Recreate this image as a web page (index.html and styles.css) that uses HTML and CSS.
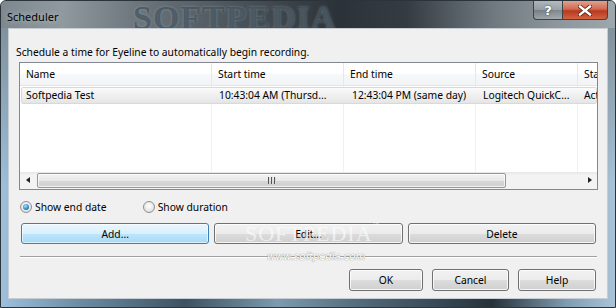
FILE: index.html
```html
<!DOCTYPE html>
<html lang="en">
<head>
  <meta charset="UTF-8">
  <title>Scheduler</title>
  <link rel="stylesheet" href="styles.css">
</head>
<body>
  <div class="window">
    <div class="titlebar">
      <span class="title">Scheduler</span>
      <div class="caption-buttons">
        <span class="caption-btn caption-btn--help">?</span>
        <span class="caption-btn caption-btn--close">
          <svg width="14" height="11" viewBox="0 0 14 11">
            <path d="M2 1.5 L12 9.5 M12 1.5 L2 9.5" stroke="#5a1a0c" stroke-width="4" stroke-linecap="square" fill="none"/>
            <path d="M2 1.5 L12 9.5 M12 1.5 L2 9.5" stroke="#fff" stroke-width="2.4" stroke-linecap="square" fill="none"/>
          </svg>
        </span>
      </div>
      <span class="watermark watermark--title">SOFTPEDIA</span>
    </div>

    <div class="client">
      <p class="intro">Schedule a time for Eyeline to automatically begin recording.</p>

      <div class="listview">
        <div class="lv-header">
          <span class="lv-col lv-col--name">Name</span>
          <span class="lv-col lv-col--start">Start time</span>
          <span class="lv-col lv-col--end">End time</span>
          <span class="lv-col lv-col--source">Source</span>
          <span class="lv-col lv-col--status">Status</span>
        </div>
        <div class="lv-body">
          <div class="lv-row lv-row--selected">
            <span class="lv-cell lv-cell--name">Softpedia Test</span>
            <span class="lv-cell lv-cell--start">10:43:04 AM (Thursd...</span>
            <span class="lv-cell lv-cell--end">12:43:04 PM (same day)</span>
            <span class="lv-cell lv-cell--source">Logitech QuickC...</span>
            <span class="lv-cell lv-cell--status">Active</span>
          </div>
        </div>
        <div class="hscroll">
          <span class="hscroll__arrow hscroll__arrow--left"></span>
          <span class="hscroll__track">
            <span class="hscroll__thumb"><span class="hscroll__grip"></span></span>
          </span>
          <span class="hscroll__arrow hscroll__arrow--right"></span>
        </div>
      </div>

      <div class="radios">
        <label class="radio radio--checked"><span class="radio__dot"></span>Show end date</label>
        <label class="radio"><span class="radio__dot"></span>Show duration</label>
      </div>

      <div class="action-buttons">
        <button class="btn btn--focused">Add...</button>
        <button class="btn">Edit...</button>
        <button class="btn">Delete</button>
      </div>

      <div class="separator"></div>

      <div class="dialog-buttons">
        <button class="btn btn--ok">OK</button>
        <button class="btn btn--cancel">Cancel</button>
        <button class="btn btn--help">Help</button>
      </div>

      <span class="watermark watermark--button">SOFTPEDIA<sup>™</sup></span>
      <span class="watermark watermark--url">www.softpedia.com</span>
    </div>
  </div>
</body>
</html>
```

FILE: styles.css
```css
body, html {
  margin: 0;
  font-family: "Noto Sans", "Liberation Sans", sans-serif;
  font-size: 10.3px;
  color: #000;
}

.window {
  position: relative;
  width: 616px;
  height: 308px;
  box-sizing: border-box;
  border: 1px solid #2b343a;
  border-radius: 6px 6px 0 0;
  display: flex;
  flex-direction: column;
  overflow: hidden;
  background:
    linear-gradient(to bottom, rgba(120, 132, 138, 0.9), rgba(120, 132, 138, 0) 60%),
    linear-gradient(to right, #9ec0dc 0%, #6f8fa6 12%, #3c5262 30%, #7d9aae 45%, #4e6676 60%, #26323a 80%, #7f9bb0 92%, #a9c4d8 100%);
}

/* title bar */
.titlebar {
  position: relative;
  height: 27px;
  flex: none;
  display: flex;
  justify-content: space-between;
  align-items: flex-start;
  padding: 0 7px 0 6px;
  background: linear-gradient(to right, #7d888e 0%, #8f999e 10%, #6c767c 22%, #4a545a 38%, #2c3338 55%, #343c42 66%, #6e787e 80%, #8b959a 90%, #9ea7ab 100%);
}

.title {
  position: relative;
  z-index: 1;
  margin-top: 8px;
  font-size: 11px;
  color: #000;
  text-shadow: 0 0 6px rgba(255, 255, 255, 0.6);
}

.caption-buttons {
  position: relative;
  z-index: 1;
  display: flex;
}

.caption-btn {
  display: flex;
  align-items: center;
  justify-content: center;
  height: 18px;
  border: 1px solid #3d4448;
  border-top: none;
  color: #fff;
  font-weight: bold;
  font-family: "DejaVu Sans", sans-serif;
}

.caption-btn--help {
  width: 28px;
  border-right: none;
  border-radius: 0 0 0 4px;
  font-size: 13px;
  background: linear-gradient(to bottom, rgba(255, 255, 255, 0.35), rgba(255, 255, 255, 0.12) 50%, rgba(0, 0, 0, 0.1) 51%, rgba(255, 255, 255, 0.2));
  text-shadow: 0 0 2px #333;
}

.caption-btn--close {
  width: 44px;
  border-radius: 0 0 4px 0;
  background: linear-gradient(to bottom, #e3a08f, #d06a52 45%, #b8391f 55%, #d4623f);
}

.watermark {
  position: absolute;
  pointer-events: none;
  font-family: "Liberation Serif", serif;
  font-weight: bold;
}

.watermark--title {
  left: 132px;
  top: -2px;
  font-size: 34px;
  letter-spacing: 1px;
  color: rgba(58, 74, 86, 0.7);
  text-shadow: 0 0 3px rgba(170, 182, 190, 0.5);
}

/* client area */
.client {
  position: relative;
  flex: 1;
  margin: 0 7px 8px 7px;
  padding: 0 9px 0 10px;
  background: #f0f0f0;
  border: 1px solid #c6ced3;
  display: flex;
  flex-direction: column;
}

.intro {
  margin: 16px 0 0 -3px;
  line-height: 14px;
}

/* list view */
.listview {
  margin-top: 3px;
  height: 128px;
  box-sizing: border-box;
  border: 1px solid #828790;
  background: #fff;
  display: flex;
  flex-direction: column;
  overflow: hidden;
}

.lv-header {
  display: flex;
  height: 22px;
  flex: none;
  align-items: center;
  background: linear-gradient(to bottom, #fff, #fff 50%, #f7f8f9 51%, #f2f3f5);
  border-bottom: 1px solid #e5e5e5;
}

.lv-col {
  box-sizing: border-box;
  flex: none;
  padding-left: 6px;
  white-space: nowrap;
  overflow: hidden;
  line-height: 22px;
  border-right: 1px solid #e3e8ee;
}

.lv-col--name { width: 192px; }
.lv-col--start { width: 132px; }
.lv-col--end { width: 132px; }
.lv-col--source { width: 102px; }
.lv-col--status { width: 60px; border-right: none; }

.lv-body {
  flex: 1;
  padding-top: 1px;
  background:
    linear-gradient(#edf2f9, #edf2f9) 191px 0 / 1px 100% no-repeat,
    linear-gradient(#edf2f9, #edf2f9) 323px 0 / 1px 100% no-repeat,
    linear-gradient(#edf2f9, #edf2f9) 455px 0 / 1px 100% no-repeat,
    linear-gradient(#edf2f9, #edf2f9) 557px 0 / 1px 100% no-repeat;
}

.lv-row {
  display: flex;
  height: 17px;
  align-items: center;
  margin-left: 1px;
}

.lv-row--selected {
  box-sizing: border-box;
  border: 1px solid #d9d9d9;
  border-radius: 2px;
  background: linear-gradient(to bottom, #fafafa, #e5e5e5);
}

.lv-cell {
  box-sizing: border-box;
  flex: none;
  white-space: nowrap;
  overflow: hidden;
  line-height: 15px;
}

.lv-cell--name { width: 191px; padding-left: 4px; }
.lv-cell--start { width: 132px; padding-left: 6px; }
.lv-cell--end { width: 132px; padding-left: 7px; }
.lv-cell--source { width: 102px; padding-left: 6px; }
.lv-cell--status { width: 20px; padding-left: 5px; }

/* horizontal scrollbar */
.hscroll {
  display: flex;
  height: 17px;
  flex: none;
  background: linear-gradient(to bottom, #e6e6e6, #f3f3f3 20%, #f3f3f3);
}

.hscroll__arrow {
  width: 17px;
  flex: none;
  position: relative;
}

.hscroll__arrow::after {
  content: "";
  position: absolute;
  top: 5px;
  border-top: 3.5px solid transparent;
  border-bottom: 3.5px solid transparent;
}

.hscroll__arrow--left::after {
  left: 6px;
  border-right: 4px solid #222;
}

.hscroll__arrow--right::after {
  left: 8px;
  border-left: 4px solid #222;
}

.hscroll__track {
  flex: 1;
  padding: 1px 0;
}

.hscroll__thumb {
  display: flex;
  align-items: center;
  justify-content: center;
  box-sizing: border-box;
  width: 469px;
  height: 15px;
  border: 1px solid #979797;
  border-radius: 2px;
  background: linear-gradient(to bottom, #f3f3f3, #e8e8e8 50%, #d6d6d6 51%, #d0d0d0);
  box-shadow: inset 0 0 0 1px rgba(255, 255, 255, 0.7);
}

.hscroll__grip {
  width: 8px;
  height: 7px;
  background: repeating-linear-gradient(to right, #555 0, #555 1px, #ddd 1px, #ddd 2px, transparent 2px, transparent 3px);
}

/* radios */
.radios {
  display: flex;
  margin-top: 10px;
  height: 14px;
  align-items: center;
}

.radio {
  display: flex;
  align-items: center;
  gap: 3px;
  margin-left: 1px;
}

.radio + .radio {
  margin-left: 36px;
}

.radio__dot {
  box-sizing: border-box;
  width: 12px;
  height: 12px;
  border: 1px solid #8e8f8f;
  border-radius: 50%;
  background: radial-gradient(circle at 50% 40%, #fff, #e2e2e2 70%, #cfcfcf);
  position: relative;
}

.radio--checked .radio__dot::after {
  content: "";
  position: absolute;
  left: 2px;
  top: 2px;
  width: 6px;
  height: 6px;
  border-radius: 50%;
  background: radial-gradient(circle at 40% 35%, #a8e0ff, #2a88c8 60%, #114f7c);
}

/* buttons */
.btn {
  box-sizing: border-box;
  height: 21px;
  padding: 0;
  font: inherit;
  color: #000;
  border: 1px solid #707070;
  border-radius: 3px;
  background: linear-gradient(to bottom, #f2f2f2, #ebebeb 50%, #dddddd 51%, #cfcfcf);
  box-shadow: inset 0 0 0 1px rgba(255, 255, 255, 0.8);
}

.btn--focused {
  border-color: #3c7fb1;
  background: linear-gradient(to bottom, #eaf6fd, #d9f0fc 50%, #bee6fd 51%, #a7d9f5);
  box-shadow: inset 0 0 0 1px rgba(255, 255, 255, 0.6);
}

.action-buttons {
  display: grid;
  grid-template-columns: 1fr 1fr 1fr;
  gap: 5px;
  margin: 9px 2px 0 2px;
}

.separator {
  margin: 12px 1px 0 1px;
  height: 1px;
  background: #a0a0a0;
  border-bottom: 1px solid #fff;
}

.dialog-buttons {
  display: flex;
  justify-content: flex-end;
  gap: 9px;
  margin: 11px 2px 0 0;
}

.dialog-buttons .btn {
  height: 22px;
}

.btn--ok { width: 74px; }
.btn--cancel { width: 77px; }
.btn--help { width: 78px; }

.watermark--button {
  left: 236px;
  top: 192px;
  font-size: 22px;
  font-weight: normal;
  letter-spacing: 1px;
  color: rgba(255, 255, 255, 0.6);
}

.watermark--button sup {
  font-size: 7px;
  vertical-align: top;
}

.watermark--url {
  left: 258px;
  top: 222px;
  font-size: 10px;
  font-style: italic;
  font-weight: normal;
  font-family: "DejaVu Sans", sans-serif;
  color: #fff;
  text-shadow: 0 0 1px #999, 0 0 1px #999;
}
```
